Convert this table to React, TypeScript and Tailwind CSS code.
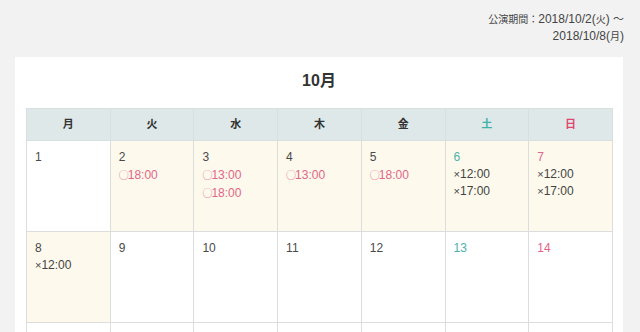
const days = ['月', '火', '水', '木', '金', '土', '日'];

type Cell = { day?: number; slots: string[]; open?: boolean };

const weeks: Cell[][] = [
  [
    { day: 1, slots: [] },
    { day: 2, slots: ['○18:00'], open: true },
    { day: 3, slots: ['○13:00', '○18:00'], open: true },
    { day: 4, slots: ['○13:00'], open: true },
    { day: 5, slots: ['○18:00'], open: true },
    { day: 6, slots: ['×12:00', '×17:00'], open: true },
    { day: 7, slots: ['×12:00', '×17:00'], open: true },
  ],
  [
    { day: 8, slots: ['×12:00'], open: true },
    { day: 9, slots: [] },
    { day: 10, slots: [] },
    { day: 11, slots: [] },
    { day: 12, slots: [] },
    { day: 13, slots: [] },
    { day: 14, slots: [] },
  ],
];

const dayColor = (i: number) => (i === 5 ? 'text-[#4bb3ac]' : i === 6 ? 'text-[#e0668a]' : 'text-[#4a4a4a]');

const Slot = ({ s }: { s: string }) => {
  const mark = s.slice(0, 1);
  const time = s.slice(1);
  if (mark === '○') {
    return (
      <div className="text-[#e0668a]">
        <span className="mr-[-1px] font-['Noto_Sans_CJK_JP',sans-serif] text-[10px] leading-[17px] font-light">○</span>
        {time}
      </div>
    );
  }
  return (
    <div className="text-[#444]">
      <span className="text-[11px]">×</span>
      {time}
    </div>
  );
};

export default function App() {
  return (
    <div className="h-[332px] w-[640px] overflow-hidden bg-[#f2f2f2] font-['Liberation_Sans','Noto_Sans_CJK_JP',sans-serif] text-[#444]">
      <div className="flex flex-col items-end pt-[11px] pr-[16px] text-[12px] leading-[17px] text-[#444]">
        <p>
          <span className="text-[10px]">公演期間：</span>2018/10/2(<span className="text-[10px]">火</span>) <span className="text-[11px]">～</span>
        </p>
        <p>
          2018/10/8(<span className="text-[10px]">月</span>)
        </p>
      </div>
      <div className="mt-[12px] ml-[15px] w-[608px] bg-white px-[11px] pb-6">
        <h2 className="pt-[14px] pb-[17px] text-center text-[16px] leading-[20px] font-bold text-[#333]">10月</h2>
        <table className="w-[587px] table-fixed border-collapse">
          <thead>
            <tr className="bg-[#dee8e8]">
              {days.map((d, i) => (
                <th
                  key={d}
                  className={`h-[32px] border border-[#d8dfdf] text-center text-[11px] font-bold ${i === 5 ? 'text-[#3fb3a8]' : i === 6 ? 'text-[#e0466f]' : 'text-[#333]'}`}
                >
                  {d}
                </th>
              ))}
            </tr>
          </thead>
          <tbody>
            {weeks.map((w, wi) => (
              <tr key={wi}>
                {w.map((c, i) => (
                  <td
                    key={i}
                    className={`h-[91px] border border-[#dddddd] px-[8px] pt-[8px] align-top text-[12px] leading-[17px] ${c.open ? 'bg-[#fdf9ec]' : 'bg-white'}`}
                  >
                    <div className={dayColor(i)}>{c.day}</div>
                    {c.slots.map((s) => (
                      <Slot key={s} s={s} />
                    ))}
                  </td>
                ))}
              </tr>
            ))}
            <tr>
              {days.map((d) => (
                <td key={d} className="h-[91px] border border-[#dddddd] bg-white" />
              ))}
            </tr>
          </tbody>
        </table>
      </div>
    </div>
  );
}
